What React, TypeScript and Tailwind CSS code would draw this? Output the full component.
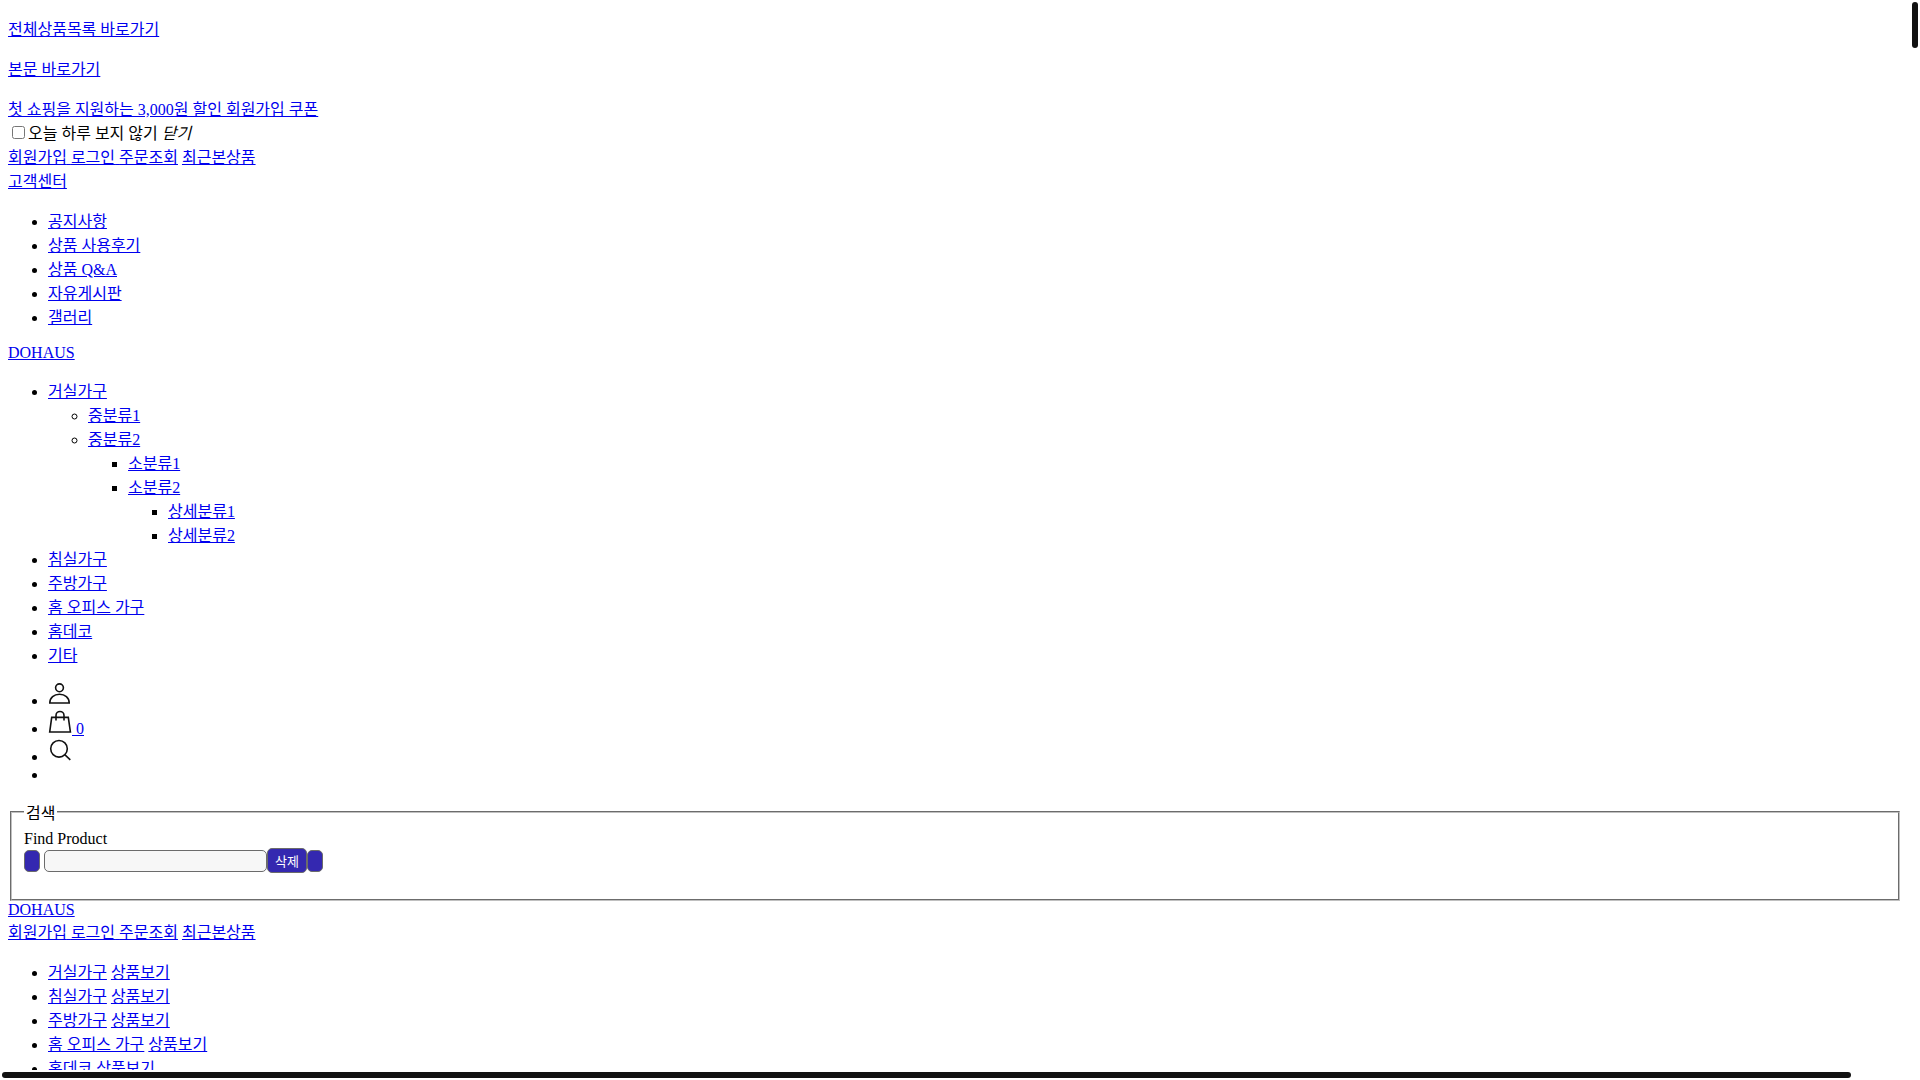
import React from "react";

const linkClass = "text-[#0000ee] underline";

type TextLinkProps = {
  children: React.ReactNode;
};

const TextLink: React.FC<TextLinkProps> = ({ children }) => (
  <a href="#" className={linkClass}>
    {children}
  </a>
);

const boardLinks = ["공지사항", "상품 사용후기", "상품 Q&A", "자유게시판", "갤러리"];
const categories = ["침실가구", "주방가구", "홈 오피스 가구", "홈데코", "기타"];
const sideCategories = ["거실가구", ...categories];

const UserIcon = () => (
  <svg
    className="inline size-6 align-baseline"
    viewBox="0 0 24 24"
    fill="none"
    stroke="#111"
    strokeWidth="1.6"
  >
    <circle cx="11.5" cy="5.8" r="3.9" />
    <path d="M1.8 21c0-5.2 4.2-8.8 9.7-8.8s9.7 3.6 9.7 8.8z" />
  </svg>
);

const BagIcon = () => (
  <svg
    className="inline size-6 align-baseline"
    viewBox="0 0 24 24"
    fill="none"
    stroke="#111"
    strokeWidth="1.6"
  >
    <path d="M3.7 7.4h16.6l2.1 14.6H1.7z" />
    <path d="M8 10.6V5.5a4 4 0 0 1 8 0v5.1" />
  </svg>
);

const SearchIcon = () => (
  <svg
    className="inline size-6 align-baseline"
    viewBox="0 0 24 24"
    fill="none"
    stroke="#111"
    strokeWidth="1.6"
  >
    <circle cx="11" cy="10.8" r="8.3" />
    <path d="M17 16.8l5.3 5" />
  </svg>
);

const MemberLinks = () => (
  <div>
    <a href="#" className={linkClass}>
      회원가입{" "}
    </a>
    <a href="#" className={linkClass}>
      로그인{" "}
    </a>
    <TextLink>주문조회</TextLink> <TextLink>최근본상품</TextLink>
  </div>
);

const SearchForm = () => (
  <form onSubmit={(e) => e.preventDefault()}>
    <fieldset className="mx-0.5 border-2 border-[#c0c0c0] [border-style:groove] px-3 pt-1.5 pb-[26px]">
      <legend className="px-0.5">검색</legend>
      <label htmlFor="keyword" className="block">
        Find Product
      </label>
      <div className="flex items-center">
        <button
          type="button"
          aria-label="뒤로"
          className="mr-1 h-[22px] w-4 rounded-[5px] border border-[#6b6b6b] bg-[#3428b0]"
        />
        <input
          id="keyword"
          type="text"
          className="h-[22px] w-[223px] rounded-[5px] border border-[#6b6b6b] bg-[#f7f7f7] px-1 text-[13px]"
        />
        <button
          type="button"
          className="h-[25px] w-10 rounded-[5px] border border-[#6b6b6b] bg-[#3428b0] text-[13px] text-white"
        >
          삭제
        </button>
        <button
          type="submit"
          aria-label="검색"
          className="h-[22px] w-4 rounded-[5px] border border-[#6b6b6b] bg-[#3428b0]"
        />
      </div>
    </fieldset>
  </form>
);

const App = () => {
  return (
    <div className="grid h-screen grid-cols-[minmax(0,1fr)_10px] grid-rows-[minmax(0,1fr)_10px] bg-white font-['Liberation_Serif','Noto_Sans_CJK_KR',serif] text-base leading-[normal] text-black [text-rendering:optimizeSpeed]">
      <main className="overflow-hidden px-2" lang="ko">
        {/* Skip links */}
        <p className="my-4">
          <TextLink>전체상품목록 바로가기</TextLink>
        </p>
        <p className="my-4">
          <TextLink>본문 바로가기</TextLink>
        </p>

        {/* Coupon banner */}
        <div>
          <TextLink>첫 쇼핑을 지원하는 3,000원 할인 회원가입 쿠폰</TextLink>
        </div>
        <div>
          <input
            id="hide-today"
            type="checkbox"
            className="mt-[3px] mr-[3px] ml-1 size-[13px]"
          />
          <label htmlFor="hide-today">오늘 하루 보지 않기</label> <i>닫기</i>
        </div>

        <MemberLinks />
        <div>
          <TextLink>고객센터</TextLink>
        </div>
        <ul className="my-4 list-disc pl-10">
          {boardLinks.map((name) => (
            <li key={name}>
              <TextLink>{name}</TextLink>
            </li>
          ))}
        </ul>

        <div>
          <TextLink>DOHAUS</TextLink>
        </div>

        {/* Category tree */}
        <ul className="my-4 list-disc pl-10">
          <li>
            <TextLink>거실가구</TextLink>
            <ul className="list-[circle] pl-10">
              <li>
                <TextLink>중분류1</TextLink>
              </li>
              <li>
                <TextLink>중분류2</TextLink>
                <ul className="list-[square] pl-10">
                  <li>
                    <TextLink>소분류1</TextLink>
                  </li>
                  <li>
                    <TextLink>소분류2</TextLink>
                    <ul className="list-[square] pl-10">
                      <li>
                        <TextLink>상세분류1</TextLink>
                      </li>
                      <li>
                        <TextLink>상세분류2</TextLink>
                      </li>
                    </ul>
                  </li>
                </ul>
              </li>
            </ul>
          </li>
          {categories.map((name) => (
            <li key={name}>
              <TextLink>{name}</TextLink>
            </li>
          ))}
        </ul>

        {/* Shop icons */}
        <ul className="my-4 list-disc pl-10">
          <li>
            <a href="#" aria-label="마이페이지">
              <UserIcon />
            </a>
          </li>
          <li>
            <a href="#" className={linkClass}>
              <BagIcon /> <span>0</span>
            </a>
          </li>
          <li>
            <a href="#" aria-label="검색">
              <SearchIcon />
            </a>
          </li>
          <li className="h-[18px]" />
        </ul>

        <SearchForm />

        <div>
          <TextLink>DOHAUS</TextLink>
        </div>
        <MemberLinks />
        <ul className="my-4 list-disc pl-10">
          {sideCategories.map((name) => (
            <li key={name}>
              <TextLink>{name}</TextLink> <TextLink>상품보기</TextLink>
            </li>
          ))}
        </ul>
      </main>

      {/* Scrollbars */}
      <div className="p-0.5">
        <div className="h-[46px] rounded-full bg-[#111]" />
      </div>
      <div className="p-0.5">
        <div className="h-1.5 w-[97%] rounded-full bg-[#111]" />
      </div>
    </div>
  );
};

export default App;
